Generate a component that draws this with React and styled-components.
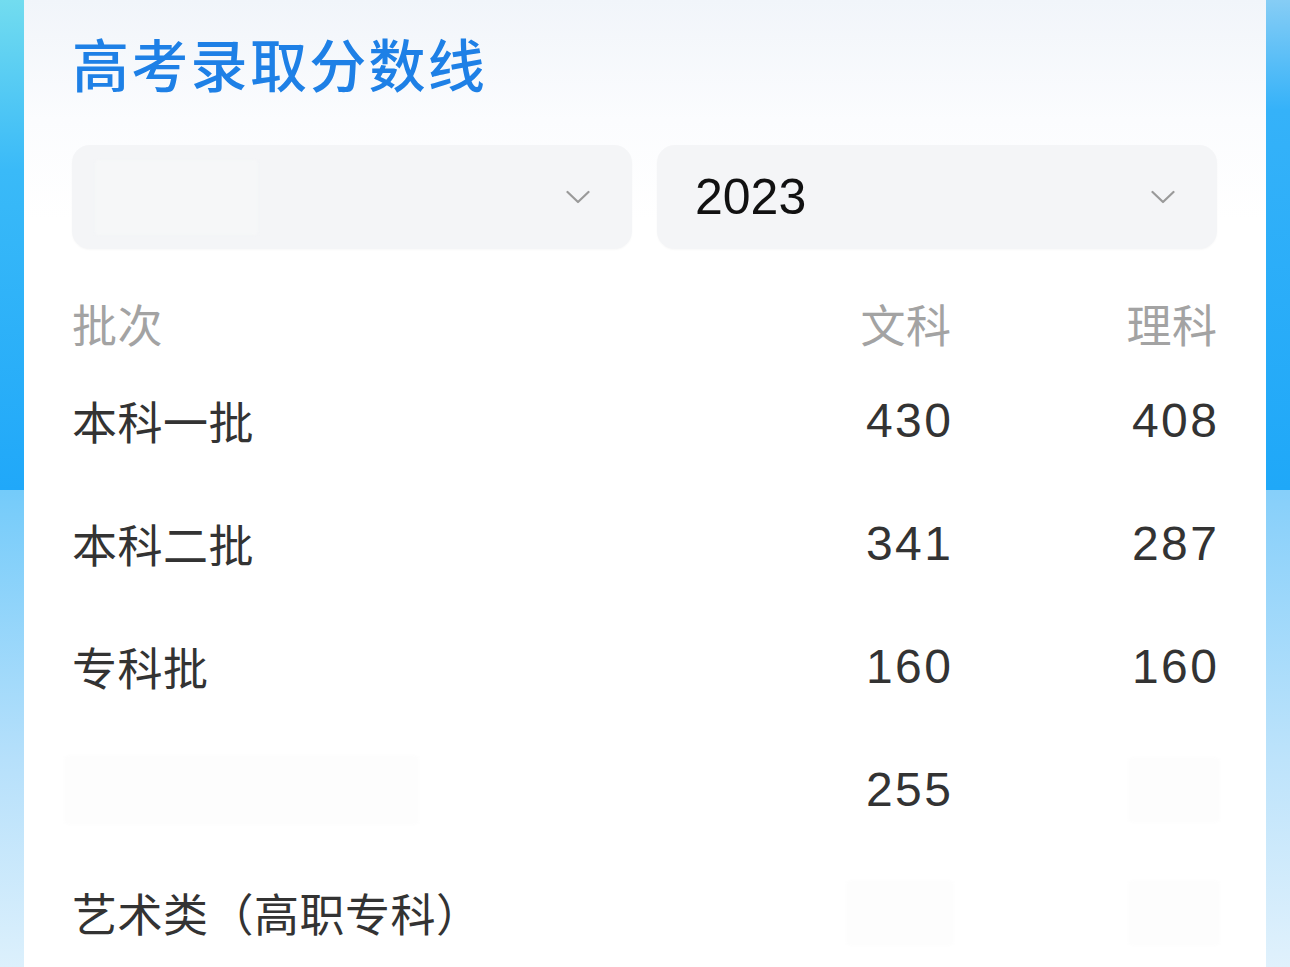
import React from "react";
import styled, { createGlobalStyle } from "styled-components";

const Global = createGlobalStyle`
  html, body { margin: 0; padding: 0; }
  body {
    font-family: "Liberation Sans", "Noto Sans CJK SC", sans-serif;
    -webkit-font-smoothing: antialiased;
  }
`;

const Page = styled.div`
  min-height: 967px;
  height: 100vh;
  box-sizing: border-box;
  padding: 0 24px;
  overflow: hidden;
  background:
    linear-gradient(180deg, #86cdf5 0px, #35b2f9 110px, #1fa8f8 490px, #86cffa 490px, #bde3fb 760px, #e0f1fc 967px) right top / 24px 100% no-repeat,
    linear-gradient(180deg, #72dcef 0px, #3abaf8 170px, #20a8f9 490px, #74cbfa 490px, #b6e0fb 760px, #dcf0fc 967px);
`;

const Card = styled.div`
  height: 100%;
  box-sizing: border-box;
  padding: 27px 49px 0 48px;
  background: linear-gradient(180deg, #f1f5fa 0px, #fbfcfe 120px, #ffffff 220px);
`;

const Title = styled.h1`
  margin: 0;
  font-family: "Noto Sans CJK SC", sans-serif;
  font-size: 57px;
  line-height: 70px;
  font-weight: 500;
  color: #1e80e6;
  letter-spacing: 2.3px;
`;

const Filters = styled.div`
  display: grid;
  grid-template-columns: 1fr 1fr;
  gap: 25px;
  margin-top: 48px;
`;

const Select = styled.div`
  height: 104px;
  border-radius: 18px;
  background: #f4f5f7;
  box-shadow: 0 1px 2px rgba(0, 0, 0, 0.03);
  display: flex;
  align-items: center;
  justify-content: space-between;
  padding: 0 42px 0 38px;
  box-sizing: border-box;
`;

const SelectValue = styled.span`
  font-size: 50px;
  color: #111;
  line-height: 1;
`;

const Placeholder = styled.span`
  width: ${(p) => p.$w}px;
  height: ${(p) => p.$h}px;
  margin-left: ${(p) => p.$ml || 0}px;
  background: ${(p) => p.$bg || "#f6f7f8"};
  border-radius: 4px;
  display: inline-block;
  filter: blur(1px);
`;

const Chevron = () => (
  <svg width="24" height="14" viewBox="0 0 24 14" fill="none">
    <path d="M1.5 2 L12 12 L22.5 2" stroke="#9a9a9a" strokeWidth="2.2" strokeLinecap="round" strokeLinejoin="round" />
  </svg>
);

const Table = styled.div`
  margin-top: 38px;
  display: grid;
  grid-template-columns: 1fr 240px 266px;
  grid-auto-rows: 123px;
  grid-template-rows: 72px;
`;

const Cell = styled.div`
  display: flex;
  align-items: center;
  justify-content: ${(p) => (p.$num ? "flex-end" : "flex-start")};
  font-family: ${(p) => (p.$num && !p.$head ? '"Liberation Sans", sans-serif' : '"Noto Sans CJK SC", sans-serif')};
  font-size: ${(p) => (p.$num && !p.$head ? "48px" : "45px")};
  letter-spacing: ${(p) => (p.$num && !p.$head ? "2.5px" : "0.5px")};
  margin-right: ${(p) => (p.$num ? (p.$head ? "-0.5px" : "-2.5px") : "0")};
  color: ${(p) => (p.$head ? "#a3a3a3" : "#333333")};
  line-height: 1;
  white-space: nowrap;
`;

const rows = [
  { name: "本科一批", wen: "430", li: "408" },
  { name: "本科二批", wen: "341", li: "287" },
  { name: "专科批", wen: "160", li: "160" },
  { name: null, wen: "255", li: null },
  { name: "艺术类（高职专科）", wen: null, li: null },
];

export default function App() {
  return (
    <>
      <Global />
      <Page>
        <Card>
          <Title>高考录取分数线</Title>
          <Filters>
            <Select>
              <Placeholder $w={163} $h={75} $ml={-15} $bg="#f6f7f8" />
              <Chevron />
            </Select>
            <Select>
              <SelectValue>2023</SelectValue>
              <Chevron />
            </Select>
          </Filters>
          <Table>
            <Cell $head>批次</Cell>
            <Cell $head $num>文科</Cell>
            <Cell $head $num>理科</Cell>
            {rows.map((r, i) => (
              <React.Fragment key={i}>
                <Cell>
                  {r.name ?? <Placeholder $w={355} $h={70} $ml={-8} $bg="#fdfdfd" />}
                </Cell>
                <Cell $num>{r.wen ?? <Placeholder $w={108} $h={66} $bg="#fdfdfd" />}</Cell>
                <Cell $num>{r.li ?? <Placeholder $w={92} $h={66} $bg="#fdfdfd" />}</Cell>
              </React.Fragment>
            ))}
          </Table>
        </Card>
      </Page>
    </>
  );
}
